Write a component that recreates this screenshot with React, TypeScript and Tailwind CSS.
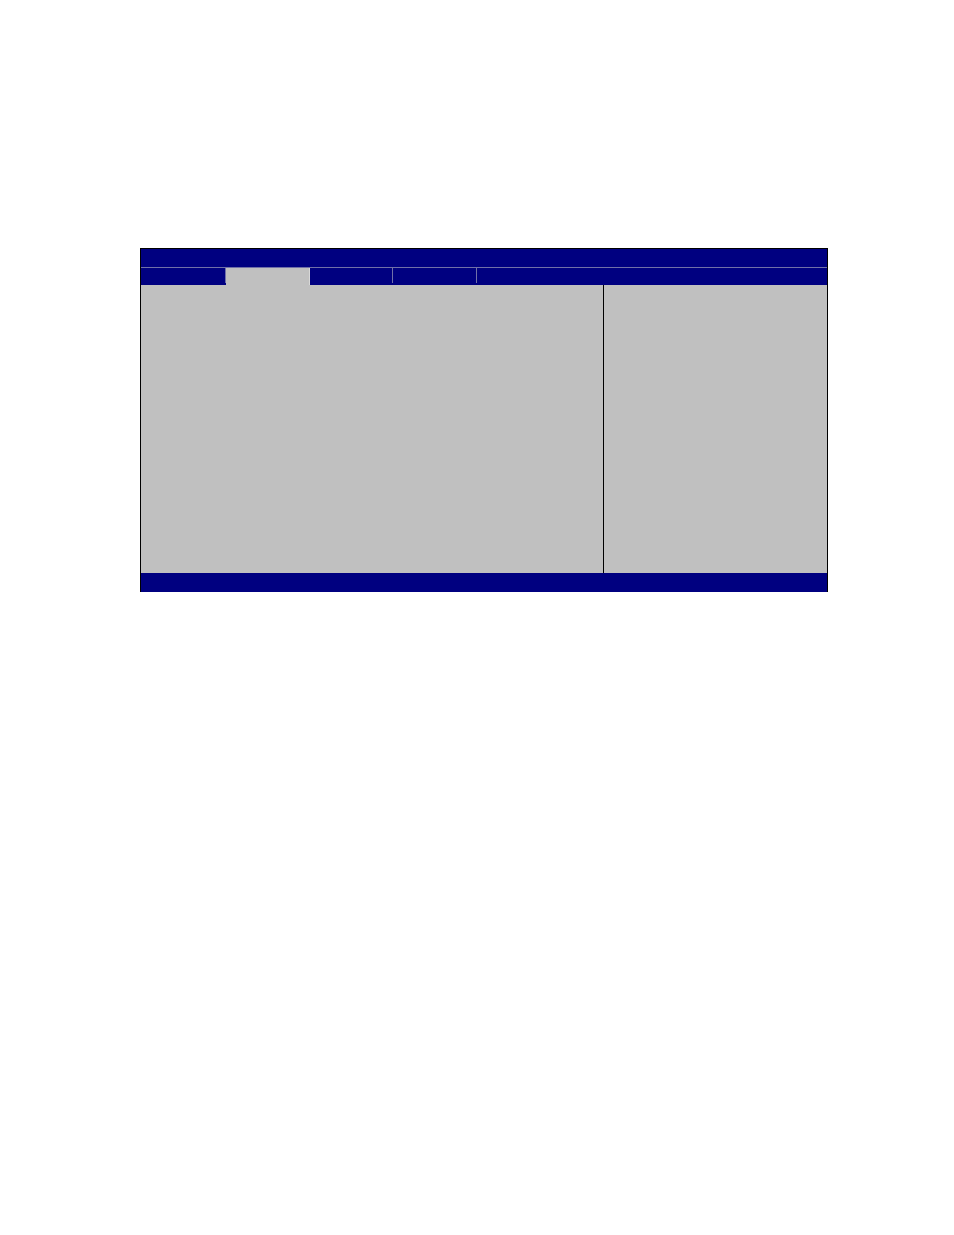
export default function App() {
  const tabs = [
    { w: 'w-[84px]', active: false },
    { w: 'w-[83px]', active: true },
    { w: 'w-[82px]', active: false },
    { w: 'w-[83px]', active: false },
  ];
  return (
    <div className="min-h-[1235px] bg-white pt-[248px] pl-[140px]">
      <div className="w-[688px] border-t border-x border-black bg-[#000080]">
        <div className="h-[18px] bg-[#000080]" />
        <div className="h-px bg-[#7070a8]" />
        <div className="flex h-[17px] bg-[#000080]">
          {tabs.map((t, i) => (
            <div key={i} className="flex shrink-0">
              <div className={`${t.w} ${t.active ? 'bg-[#c0c0c0]' : 'bg-[#000080]'}`} />
              <div className={t.active ? 'w-px bg-[#d8d8d8]' : 'w-px h-[15px] bg-[#7070a8]'} />
            </div>
          ))}
        </div>
        <div className="flex h-[288px] bg-[#c0c0c0]">
          <div className="w-[462px] shrink-0" />
          <div className="w-px bg-black" />
          <div className="flex-1" />
        </div>
        <div className="h-[19px] bg-[#000080]" />
      </div>
    </div>
  );
}
